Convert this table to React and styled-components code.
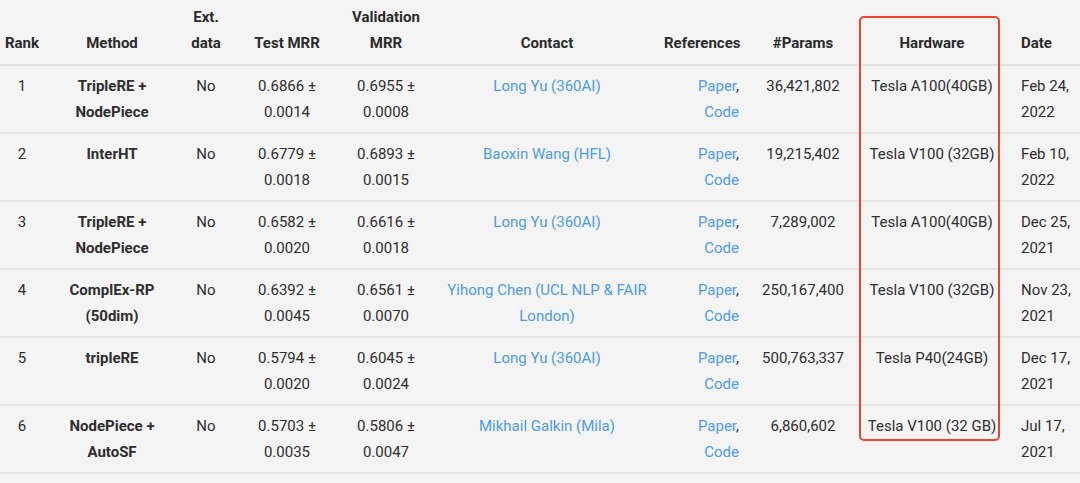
import React from 'react';
import styled, { createGlobalStyle } from 'styled-components';

const GlobalStyle = createGlobalStyle`
  html, body {
    margin: 0;
    padding: 0;
    background: #f4f4f4;
  }
  body {
    font-family: Roboto, "Noto Sans", "Liberation Sans", sans-serif;
    color: #2e2e2e;
  }
`;

const rows = [
  {
    rank: 1,
    method: 'TripleRE + NodePiece',
    ext: 'No',
    test: ['0.6866', '0.0014'],
    valid: ['0.6955', '0.0008'],
    contact: 'Long Yu (360AI)',
    params: '36,421,802',
    hardware: 'Tesla A100(40GB)',
    date: 'Feb 24, 2022',
  },
  {
    rank: 2,
    method: 'InterHT',
    ext: 'No',
    test: ['0.6779', '0.0018'],
    valid: ['0.6893', '0.0015'],
    contact: 'Baoxin Wang (HFL)',
    params: '19,215,402',
    hardware: 'Tesla V100 (32GB)',
    date: 'Feb 10, 2022',
  },
  {
    rank: 3,
    method: 'TripleRE + NodePiece',
    ext: 'No',
    test: ['0.6582', '0.0020'],
    valid: ['0.6616', '0.0018'],
    contact: 'Long Yu (360AI)',
    params: '7,289,002',
    hardware: 'Tesla A100(40GB)',
    date: 'Dec 25, 2021',
  },
  {
    rank: 4,
    method: 'ComplEx-RP (50dim)',
    ext: 'No',
    test: ['0.6392', '0.0045'],
    valid: ['0.6561', '0.0070'],
    contact: 'Yihong Chen (UCL NLP & FAIR London)',
    params: '250,167,400',
    hardware: 'Tesla V100 (32GB)',
    date: 'Nov 23, 2021',
  },
  {
    rank: 5,
    method: 'tripleRE',
    ext: 'No',
    test: ['0.5794', '0.0020'],
    valid: ['0.6045', '0.0024'],
    contact: 'Long Yu (360AI)',
    params: '500,763,337',
    hardware: 'Tesla P40(24GB)',
    date: 'Dec 17, 2021',
  },
  {
    rank: 6,
    method: 'NodePiece + AutoSF',
    ext: 'No',
    test: ['0.5703', '0.0035'],
    valid: ['0.5806', '0.0047'],
    contact: 'Mikhail Galkin (Mila)',
    params: '6,860,602',
    hardware: 'Tesla V100 (32 GB)',
    date: 'Jul 17, 2021',
  },
];

// column widths + alignment, left to right
const columns = [
  { key: 'rank', label: 'Rank', width: 44, align: 'center', pad: '0' },
  { key: 'method', label: 'Method', width: 136, align: 'center', pad: '0 16px' },
  { key: 'ext', label: 'Ext. data', width: 52, align: 'center', pad: '0' },
  { key: 'test', label: 'Test MRR', width: 110, align: 'center', pad: '0 16px' },
  { key: 'valid', label: 'Validation MRR', width: 88, align: 'center', pad: '0 8px' },
  { key: 'contact', label: 'Contact', width: 234, align: 'center', pad: '0 16px' },
  { key: 'refs', label: 'References', width: 83, align: 'right', pad: '0 8px 0 0' },
  { key: 'params', label: '#Params', width: 112, align: 'center', pad: '0 8px' },
  { key: 'hardware', label: 'Hardware', width: 146, align: 'center', pad: '0 8px' },
  { key: 'date', label: 'Date', width: 75, align: 'left', pad: '0 0 0 16px' },
];

const Board = styled.div`
  position: relative;
  width: 1080px;
  height: 483px;
  overflow: hidden;
`;

const Table = styled.table`
  border-collapse: collapse;
  table-layout: fixed;
  width: 1080px;
  font-size: 15px;
  line-height: 26px;
`;

const HeadCell = styled.th`
  text-align: ${(p) => p.$align};
  vertical-align: bottom;
  font-weight: 700;
  color: #2b2b2b;
  padding: ${(p) => p.$pad};
  padding-top: 4px;
  padding-bottom: 8px;
  border-bottom: 2px solid #e2e2e2;
`;

const Cell = styled.td`
  text-align: ${(p) => p.$align};
  vertical-align: top;
  padding: ${(p) => p.$pad};
  padding-top: 7px;
  padding-bottom: 7px;
  border-bottom: 2px solid #e4e4e4;
  font-weight: ${(p) => (p.$bold ? 700 : 400)};
  color: #2e2e2e;
`;

const Link = styled.a`
  color: #4d9be6;
  text-decoration: none;
`;

const Highlight = styled.div`
  position: absolute;
  left: 859px;
  top: 16px;
  width: 141px;
  height: 425px;
  box-sizing: border-box;
  border: 2.5px solid #e8452c;
  border-radius: 5px;
  pointer-events: none;
`;

function renderCell(key, row) {
  switch (key) {
    case 'test':
    case 'valid':
      return `${row[key][0]} ± ${row[key][1]}`;
    case 'contact':
      return <Link href="#">{row.contact}</Link>;
    case 'refs':
      return (
        <>
          <Link href="#">Paper</Link>, <Link href="#">Code</Link>
        </>
      );
    default:
      return row[key];
  }
}

export default function App() {
  return (
    <>
      <GlobalStyle />
      <Board>
        <Table>
          <colgroup>
            {columns.map((c) => (
              <col key={c.key} style={{ width: c.width }} />
            ))}
          </colgroup>
          <thead>
            <tr>
              {columns.map((c) => (
                <HeadCell key={c.key} $align={c.align} $pad={c.pad}>
                  {c.label}
                </HeadCell>
              ))}
            </tr>
          </thead>
          <tbody>
            {rows.map((row) => (
              <tr key={row.rank}>
                {columns.map((c) => (
                  <Cell
                    key={c.key}
                    $align={c.align}
                    $pad={c.pad}
                    $bold={c.key === 'method'}
                  >
                    {renderCell(c.key, row)}
                  </Cell>
                ))}
              </tr>
            ))}
          </tbody>
        </Table>
        <Highlight />
      </Board>
    </>
  );
}
